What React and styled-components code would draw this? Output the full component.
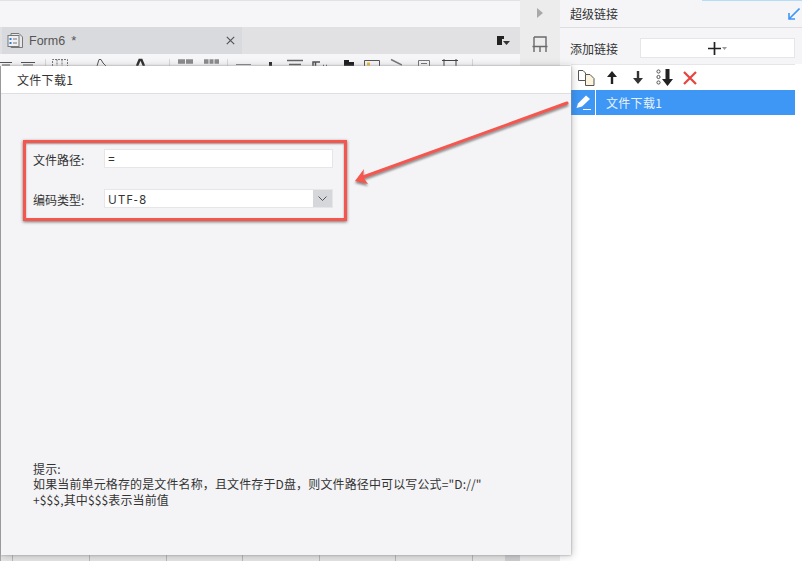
import styled, { createGlobalStyle } from "styled-components";
import { Fragment } from "react";

const GlobalStyle = createGlobalStyle`
  body {
    margin: 0;
    overflow: hidden;
    background: #fff;
    font-family: "Noto Sans CJK SC", "Noto Sans", sans-serif;
    font-size: 12px;
    color: #333;
  }
`;

const Page = styled.div`
  position: relative;
  display: flex;
  width: 802px;
  height: 561px;
  overflow: hidden;
`;

const Work = styled.div`
  width: 520px;
  display: flex;
  flex-direction: column;
`;

const TopBlank = styled.div`
  height: 26px;
  background: #f6f6f8;
  border-top: 1px solid #e2e2e4;
`;

const TabBar = styled.div`
  height: 27px;
  padding-left: 2px;
  display: flex;
  align-items: center;
  background: #e1e1e3;
`;

const Tab = styled.div`
  width: 240px;
  height: 27px;
  box-sizing: border-box;
  padding: 0 7px 0 5px;
  display: flex;
  align-items: center;
  background: #d9dadd;
  color: #555;
`;

const TabName = styled.span`
  margin-left: 5px;
  font-family: "Liberation Sans", sans-serif;
  font-size: 12.5px;
`;

const TabStar = styled.span`
  margin-left: 6px;
  font-family: "Liberation Sans", sans-serif;
  font-size: 13px;
  flex: 1;
`;

const DockIcon = styled.svg`
  margin-left: 255px;
`;

const Toolbar = styled.div`
  height: 12px;
  display: flex;
  align-items: flex-start;
  overflow: hidden;
  background: #f6f6f8;
`;

const ToolGlyph = styled.svg`
  flex: none;
  margin-left: ${({ $gap }) => $gap}px;
`;

const Sheet = styled.div`
  flex: 1;
  border-left: 1px solid #a8a8aa;
  background-color: #e6e6e7;
  background-image: repeating-linear-gradient(
    90deg,
    transparent 0 11.5px,
    #b9b9bb 11.5px 12.5px,
    transparent 12.5px 76.6px
  );
  display: flex;
  justify-content: flex-end;
`;

const SheetCorner = styled.div`
  width: 15px;
  background: #cfcfd1;
`;

const Strip = styled.div`
  width: 40px;
  display: flex;
  flex-direction: column;
  align-items: center;
  padding-top: 8px;
  gap: 18px;
  box-sizing: border-box;
  background: #ececed;
`;

const Side = styled.aside`
  flex: 1;
  display: flex;
  flex-direction: column;
`;

const SideHead = styled.div`
  height: 27px;
  padding: 0 2px 0 10px;
  display: flex;
  align-items: center;
  justify-content: space-between;
  background: #f5f5f7;
  border-bottom: 1px solid #dedee0;
  position: relative;
`;

const TopAccent = styled.i`
  position: absolute;
  top: 0;
  right: 0;
  width: 100px;
  height: 1px;
  background: #b5dcf8;
`;

const AddRow = styled.div`
  height: 36px;
  padding: 10px 7px 0 10px;
  box-sizing: border-box;
  display: flex;
  align-items: flex-start;
  gap: 22px;
  background: #f5f5f7;
`;

const AddLabel = styled.span`
  line-height: 21px;
  width: 48px;
  flex: none;
`;

const AddButton = styled.button`
  flex: 1;
  height: 20px;
  padding: 0;
  display: flex;
  align-items: center;
  justify-content: center;
  gap: 1px;
  background: #fff;
  border: 1px solid #e6e6e8;
`;

const ListPanel = styled.div`
  flex: 1;
  margin-left: 11px;
  background: #fff;
`;

const ListArea = styled.div`
  flex: 1;
  display: flex;
  background: #fff;
`;

const ListBox = styled.div`
  width: 224px;
  border-top: 1px solid #e6e6e8;
`;

const ListTools = styled.div`
  height: 25px;
  display: flex;
  align-items: center;
  padding-left: 7px;
`;

const ListGlyph = styled.svg`
  flex: none;
  margin-left: ${({ $gap }) => $gap}px;
`;

const LinkRow = styled.div`
  height: 25px;
  display: flex;
  align-items: center;
  background: #3f97f5;
  color: #e8f2fe;
`;

const LinkEdit = styled.div`
  width: 24px;
  height: 100%;
  display: flex;
  align-items: center;
  justify-content: center;
  border-right: 1px solid #fff;
`;

const LinkName = styled.span`
  margin-left: 10px;
  letter-spacing: 0.3px;
`;

const Dialog = styled.section`
  position: absolute;
  left: 1px;
  top: 66px;
  width: 570px;
  height: 489px;
  display: flex;
  flex-direction: column;
  background: #f4f4f6;
  box-shadow: 0 0 2px #9a9a9c, 1px 1px 8px rgba(0, 0, 0, 0.22);
`;

const DialogTitle = styled.header`
  height: 27px;
  padding-left: 16px;
  display: flex;
  align-items: center;
  background: #fff;
  border-bottom: 1px solid #dfdfe1;
  letter-spacing: 0.3px;
`;

const DialogBody = styled.div`
  flex: 1;
  padding: 55px 0 0 32px;
  display: flex;
  flex-direction: column;
`;

const Field = styled.label`
  display: flex;
  align-items: center;
  height: 19px;
  margin-bottom: ${({ $last }) => ($last ? 0 : 21)}px;
`;

const FieldLabel = styled.span`
  width: 71px;
  flex: none;
  padding-top: 1px;
`;

const TextBox = styled.div`
  width: 229px;
  height: 19px;
  box-sizing: border-box;
  padding: 1px 0 0 3px;
  display: flex;
  align-items: center;
  background: #fff;
  border: 1px solid #e6e6e8;
  font-family: "Noto Sans", sans-serif;
  letter-spacing: 1.4px;
`;

const SelectCaret = styled.div`
  position: absolute;
  top: 0;
  right: 0;
  width: 19px;
  height: 100%;
  display: flex;
  align-items: center;
  justify-content: center;
  background: #d6d7da;
`;

const SelectBox = styled(TextBox)`
  position: relative;
`;

const Hint = styled.p`
  margin: auto 0 48px;
  line-height: 15.5px;
  color: #333;
  font-size: 12px;
  letter-spacing: 0.13px;
`;

const Highlight = styled.div`
  position: absolute;
  left: 23px;
  top: 140px;
  width: 324px;
  height: 81px;
  box-sizing: border-box;
  border: 3px solid #f5564e;
  box-shadow: 0 1px 3px rgba(0, 0, 0, 0.55), inset 0 1px 2px rgba(0, 0, 0, 0.4);
`;

const Callout = styled.svg`
  position: absolute;
  left: 340px;
  top: 90px;
  filter: drop-shadow(0 2px 1px rgba(0, 0, 0, 0.45));
`;

const toolGlyphs = [
  { gap: 0, w: 12, d: "M0 8.5H12 M2 11H10", c: "#555" },
  { gap: 9, w: 14, d: "M0 8.5H14 M2 11H12", c: "#555" },
  { gap: 10, w: 1, d: "M.5 5V12", c: "#d8d8da" },
  { gap: 6, w: 16, d: "M.5 12V5.5H15.5V12 M5 5.5V12 M10 5.5V12", c: "#777", dash: "2 1" },
  { gap: 27, w: 12, d: "M2 12L4 5.5H6L8 9L11 12", c: "#555" },
  { gap: 28, w: 11, d: "M2 12L4.5 6H6.5L9 12", c: "#333", sw: 2.4 },
  { gap: 23, w: 1, d: "M.5 5V12", c: "#d8d8da" },
  { gap: 8, w: 15, d: "M0 7.5H7 M8 7.5H15", c: "#8c8c8e", sw: 4.5 },
  { gap: 11, w: 15, d: "M0 7.5H4.5 M5.5 7.5H9.5 M10.5 7.5H15", c: "#8c8c8e", sw: 4.5 },
  { gap: 8, w: 1, d: "M.5 5V12", c: "#d8d8da" },
  { gap: 8, w: 15, d: "M0 10.5H15", c: "#8c8c8e" },
  { gap: 18, w: 3, d: "M1.5 8V12", c: "#333", sw: 3 },
  { gap: 15, w: 16, d: "M0 6.5H16 M2 10.5H14", c: "#666", sw: 1.5 },
  { gap: 9, w: 16, d: "M1 12V8H8 M3.5 8V12 M11 11.5H12 M14 11.5H15", c: "#555", sw: 1.5 },
  { gap: 16, w: 10, d: "M2.5 6V12 M7.5 8V12", c: "#222", sw: 5 },
  { gap: 10, w: 16, d: "M.5 12V6.5H15.5V12", c: "#555", dot: "#f5b93a" },
  { gap: 10, w: 12, d: "M1 5.5L12 11", c: "#777", sw: 1.5 },
  { gap: 16, w: 12, d: "M.5 12V6.5H11.5V12 M3 9.5H9", c: "#777" },
  { gap: 12, w: 16, d: "M0 6.5H16 M2 5V12 M14 5V12", c: "#444" },
  { gap: 14, w: 1, d: "M.5 5V12", c: "#d8d8da" },
];

const formFileIcon = (
  <svg width="17" height="17" viewBox="0 0 17 17" fill="none">
    <path d="M4 1.5H12L15.5 5V15.5H4Z" fill="#e8e8ea" stroke="#777" />
    <rect x="1" y="3.5" width="11" height="11" fill="#f0f0f2" stroke="#777" />
    <rect x="2.5" y="6" width="2" height="2" fill="#2f80d8" />
    <rect x="2.5" y="10" width="2" height="2" fill="#2f80d8" />
    <path d="M6 7H10M6 11H10" stroke="#777" />
  </svg>
);

const App = () => {
  return (
    <Fragment>
      <GlobalStyle />
      <Page>
        <Work>
          <TopBlank />
          <TabBar>
            <Tab>
              {formFileIcon}
              <TabName>Form6</TabName>
              <TabStar>*</TabStar>
              <svg width="9" height="9" viewBox="0 0 9 9" fill="none" stroke="#555" strokeWidth="1.2">
                <path d="M.8 .8L8.2 8.2M8.2 .8L.8 8.2" />
              </svg>
            </Tab>
            <DockIcon width="14" height="10" viewBox="0 0 14 10">
              <path d="M0 0H7V3H5V9H0Z" fill="#222" />
              <path d="M6 5H13L9.5 9Z" fill="#333" />
            </DockIcon>
          </TabBar>
          <Toolbar>
            {toolGlyphs.map(({ gap, w, d, c, sw, dash, dot }, i) => (
              <ToolGlyph key={i} $gap={gap} width={w} height="12" viewBox={`0 0 ${w} 12`} fill="none">
                <path d={d} stroke={c} strokeWidth={sw || 1} strokeDasharray={dash} />
                {dot && <rect x="3" y="8.5" width="3" height="3" fill={dot} />}
              </ToolGlyph>
            ))}
          </Toolbar>
          <Sheet>
            <SheetCorner />
          </Sheet>
        </Work>

        <Strip>
          <svg width="6" height="10" viewBox="0 0 6 10">
            <path d="M0 0L6 5L0 10Z" fill="#a9a9ab" />
          </svg>
          <svg width="16" height="16" viewBox="0 0 16 16" fill="none" stroke="#6a6a6d" strokeWidth="1.4">
            <path d="M.5 10.5H15.5 M2 1H14V16 M2 1V16 M8 10.5V16" />
          </svg>
        </Strip>

        <Side>
          <SideHead>
            <TopAccent />
            超级链接
            <svg width="12" height="12" viewBox="0 0 12 12" fill="none" stroke="#3f97f5" strokeWidth="1.6">
              <path d="M11.5 .5L1.5 10.5 M1 5V11H7" />
            </svg>
          </SideHead>
          <AddRow>
            <AddLabel>添加链接</AddLabel>
            <AddButton>
              <svg width="13" height="13" viewBox="0 0 13 13">
                <path d="M0 6.5H13M6.5 0V13" stroke="#222" strokeWidth="1.7" />
              </svg>
              <svg width="5" height="3" viewBox="0 0 5 3">
                <path d="M0 0H5L2.5 3Z" fill="#999" />
              </svg>
            </AddButton>
          </AddRow>
          <ListArea>
            <ListPanel>
              <ListBox>
                <ListTools>
                  <ListGlyph $gap={0} width="17" height="17" viewBox="0 0 17 17" fill="none">
                    <path d="M7.5 5.5H12L16 9.5V16.5H7.5Z" fill="#fbf3dc" stroke="#555" />
                    <path d="M.5 1.5H5L7.5 4V5.5 M.5 1.5V11.5H7.5" fill="#fff" stroke="#555" />
                  </ListGlyph>
                  <ListGlyph $gap={12} width="10" height="13" viewBox="0 0 10 13">
                    <path d="M5 0L10 6H6.2V13H3.8V6H0Z" fill="#222" />
                  </ListGlyph>
                  <ListGlyph $gap={16} width="10" height="13" viewBox="0 0 10 13">
                    <path d="M5 13L10 7H6.2V0H3.8V7H0Z" fill="#333" />
                  </ListGlyph>
                  <ListGlyph $gap={13} width="17" height="17" viewBox="0 0 17 17">
                    <circle cx="2.5" cy="2.5" r="1.6" fill="none" stroke="#555" />
                    <circle cx="2.5" cy="8" r="1.6" fill="none" stroke="#555" />
                    <circle cx="2.5" cy="13.5" r="1.6" fill="none" stroke="#555" />
                    <path d="M11.5 17L17 10H13.5V0H9.5V10H6Z" fill="#222" />
                  </ListGlyph>
                  <ListGlyph $gap={10} width="14" height="14" viewBox="0 0 14 14">
                    <path d="M1 1L13 13M13 1L1 13" stroke="#e8433c" strokeWidth="2.2" />
                  </ListGlyph>
                </ListTools>
                <LinkRow>
                  <LinkEdit>
                    <svg width="15" height="15" viewBox="0 0 15 15">
                      <path d="M.5 13L2 8.5L10 .5L14 4L6 11.5Z" fill="#fff" />
                      <path d="M7 14.5H15" stroke="#fff" />
                    </svg>
                  </LinkEdit>
                  <LinkName>文件下载1</LinkName>
                </LinkRow>
              </ListBox>
            </ListPanel>
          </ListArea>
        </Side>

        <Dialog>
          <DialogTitle>文件下载1</DialogTitle>
          <DialogBody>
            <Field>
              <FieldLabel>文件路径:</FieldLabel>
              <TextBox>=</TextBox>
            </Field>
            <Field $last>
              <FieldLabel>编码类型:</FieldLabel>
              <SelectBox>
                UTF-8
                <SelectCaret>
                  <svg width="9" height="5" viewBox="0 0 9 5" fill="none" stroke="#555">
                    <path d="M.5 .5L4.5 4.5L8.5 .5" />
                  </svg>
                </SelectCaret>
              </SelectBox>
            </Field>
            <Hint>
              提示:
              <br />
              {"如果当前单元格存的是文件名称\uFF0C且文件存于D盘\uFF0C则文件路径中可以写公式=\"D://\""}
              <br />
              +$$$,其中$$$表示当前值
            </Hint>
          </DialogBody>
        </Dialog>

        <Highlight />
        <Callout width="232" height="100" viewBox="0 0 232 100" fill="none">
          <path d="M227 13L23 87" stroke="#f5564e" strokeWidth="3" strokeLinecap="round" />
          <path d="M15 91L24 79L23 87L28 94Z" fill="#f5564e" />
        </Callout>
      </Page>
    </Fragment>
  );
};

export default App;
